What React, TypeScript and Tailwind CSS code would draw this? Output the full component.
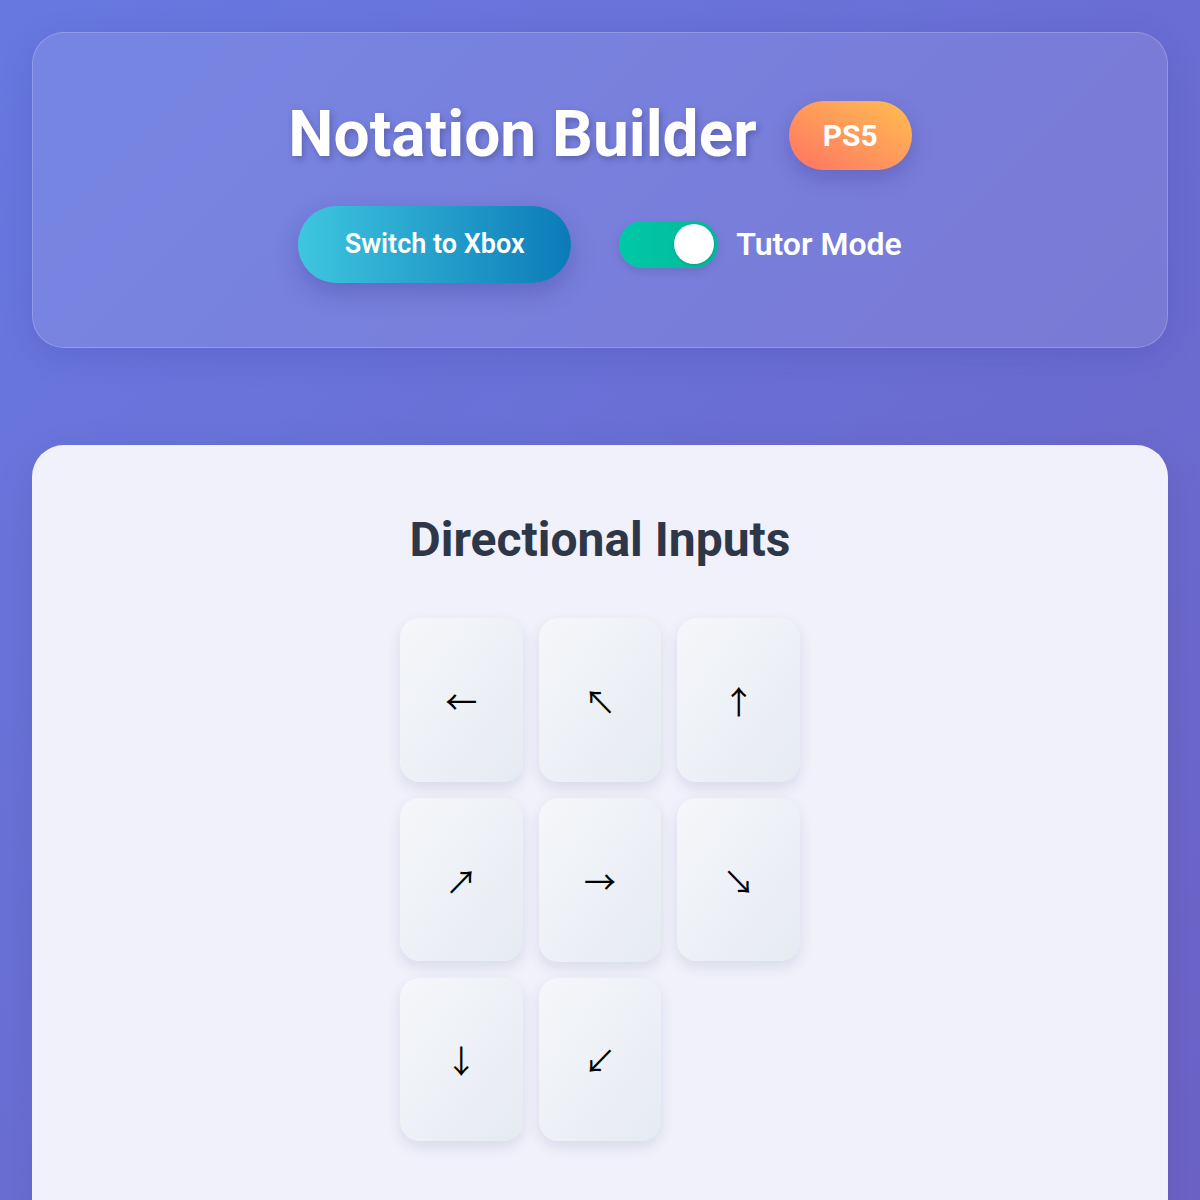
import React, { useState } from "react";

const arrows = ["←", "↖", "↑", "↗", "→", "↘", "↓", "↙"];

export default function App() {
  const [tutor, setTutor] = useState(true);

  return (
    <div
      className="min-h-[1200px] bg-gradient-to-br from-[#6779e1] to-[#6c62c6] px-8 pt-8"
      style={{ fontFamily: "Roboto, 'Liberation Sans', sans-serif" }}
    >
      {/* Header */}
      <header className="rounded-[32px] border border-white/20 bg-white/10 px-8 py-16 shadow-[0_8px_32px_rgba(31,38,135,0.15)]">
        <div className="mb-8 flex items-center justify-center gap-8">
          <h1 className="text-[64px] leading-[1.2] font-bold text-white [text-shadow:2px_3px_6px_rgba(40,40,110,0.35)]">
            Notation Builder
          </h1>
          <span className="flex h-[69px] w-[123px] items-center justify-center rounded-full bg-gradient-to-tr from-[#ff7262] to-[#ffbd4f] text-[30px] font-bold text-white shadow-[0_8px_20px_rgba(60,50,140,0.3)]">
            PS5
          </span>
        </div>
        <div className="flex items-center justify-center gap-12">
          <button className="h-[77px] w-[273px] rounded-full bg-gradient-to-r from-[#3ec6df] to-[#0b7bb8] text-[27px] font-semibold text-white shadow-[0_10px_25px_rgba(50,50,140,0.3)]">
            Switch to Xbox
          </button>
          <label className="flex items-center gap-[18px]">
            <button
              onClick={() => setTutor(!tutor)}
              className="flex h-[47px] w-[99px] items-center rounded-full bg-gradient-to-r from-[#00c9a7] to-[#00b89a] p-[4px] shadow-[0_4px_10px_rgba(0,0,0,0.1)]"
            >
              <span
                className={
                  tutor
                    ? "ml-auto h-[40px] w-[40px] rounded-full bg-white shadow"
                    : "h-[40px] w-[40px] rounded-full bg-white shadow"
                }
              />
            </button>
            <span className="text-[32px] font-semibold text-white">Tutor Mode</span>
          </label>
        </div>
      </header>

      {/* Directional inputs */}
      <section className="mt-[97px] rounded-[32px] bg-[#f0f1fa] px-12 pt-[66px] pb-24 shadow-[0_10px_40px_rgba(0,0,0,0.08)]">
        <h2 className="mb-[50px] text-center text-[48px] leading-[1.2] font-bold text-[#2d3748]">
          Directional Inputs
        </h2>
        <div className="mx-auto grid w-[400px] grid-cols-3 gap-4">
          {arrows.map((a) => (
            <button
              key={a}
              className="flex aspect-[3/4] items-center justify-center rounded-[20px] bg-gradient-to-br from-[#f5f7fa] to-[#e6eaf2] text-[32px] text-black shadow-[0_6px_14px_rgba(60,60,120,0.12)]"
              style={{ fontFamily: "'Noto Sans CJK SC', sans-serif" }}
            >
              {a}
            </button>
          ))}
        </div>
      </section>
    </div>
  );
}
